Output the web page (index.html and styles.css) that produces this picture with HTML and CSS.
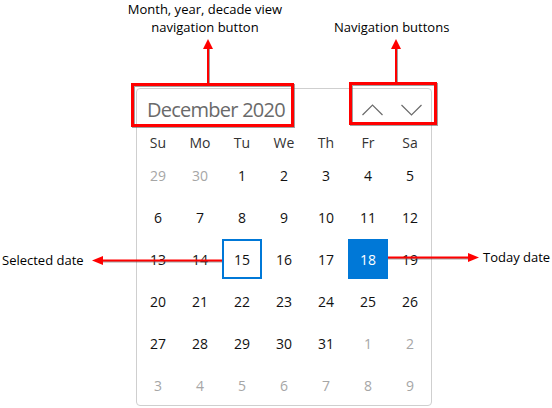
FILE: index.html
```html
<!DOCTYPE html>
<html>
<head>
<meta charset="utf-8">
<link rel="stylesheet" href="styles.css">
</head>
<body>
<div class="stage">
  <div class="calendar">
    <div class="cal-header">
      <button class="title-btn">December 2020</button>
      <div class="nav">
        <button class="nav-btn" aria-label="Previous"><svg width="21" height="12" viewBox="0 0 21 12"><polyline points="0.5,11 10.5,1 20.5,11" fill="none" stroke="#6b6b6b" stroke-width="1.2"/></svg></button>
        <button class="nav-btn" aria-label="Next"><svg width="21" height="12" viewBox="0 0 21 12"><polyline points="0.5,1 10.5,11 20.5,1" fill="none" stroke="#6b6b6b" stroke-width="1.2"/></svg></button>
      </div>
    </div>
    <div class="weekdays">
      <span>Su</span><span>Mo</span><span>Tu</span><span>We</span><span>Th</span><span>Fr</span><span>Sa</span>
    </div>
    <div class="days">
      <span class="other">29</span><span class="other">30</span><span>1</span><span>2</span><span>3</span><span>4</span><span>5</span>
      <span>6</span><span>7</span><span>8</span><span>9</span><span>10</span><span>11</span><span>12</span>
      <span>13</span><span>14</span><span class="selected">15</span><span>16</span><span>17</span><span class="today">18</span><span>19</span>
      <span>20</span><span>21</span><span>22</span><span>23</span><span>24</span><span>25</span><span>26</span>
      <span>27</span><span>28</span><span>29</span><span>30</span><span>31</span><span class="other">1</span><span class="other">2</span>
      <span class="other">3</span><span class="other">4</span><span class="other">5</span><span class="other">6</span><span class="other">7</span><span class="other">8</span><span class="other">9</span>
    </div>
  </div>

  <svg class="overlay" width="552" height="408" viewBox="0 0 552 408">
    <g stroke="#555" fill="none" opacity="0.55">
      <rect x="133.5" y="85.5" width="160" height="41" stroke-width="3"/>
      <rect x="351.5" y="84.5" width="85" height="40" stroke-width="3"/>
      <line x1="209" y1="83" x2="209" y2="48" stroke-width="2"/>
      <line x1="397" y1="83" x2="397" y2="48" stroke-width="2"/>
      <line x1="102" y1="261.5" x2="222" y2="261.5" stroke-width="2"/>
      <line x1="388" y1="258.5" x2="470" y2="258.5" stroke-width="2"/>
    </g>
    <g stroke="#ff0000" fill="none">
      <rect x="132.5" y="84.5" width="160" height="41" stroke-width="3"/>
      <rect x="350.5" y="83.5" width="85" height="40" stroke-width="3"/>
      <line x1="208" y1="83" x2="208" y2="48" stroke-width="2"/>
      <line x1="396" y1="82" x2="396" y2="48" stroke-width="2"/>
      <line x1="101" y1="260.5" x2="222" y2="260.5" stroke-width="2"/>
      <line x1="388" y1="257.5" x2="470" y2="257.5" stroke-width="2"/>
    </g>
    <g fill="#ff0000">
      <polygon points="203,49 208,39 213,49"/>
      <polygon points="391,49 396,39 401,49"/>
      <polygon points="103,256 92,260.5 103,265"/>
      <polygon points="468,253 479,257.5 468,262"/>
    </g>
  </svg>

  <div class="label label-month">Month, year, decade view<br>navigation button</div>
  <div class="label label-nav">Navigation buttons</div>
  <div class="label label-selected">Selected date</div>
  <div class="label label-today">Today date</div>
</div>
</body>
</html>
```

FILE: styles.css
```css
* { box-sizing: border-box; }

html, body {
  margin: 0;
  padding: 0;
  background: #ffffff;
}

.stage {
  position: relative;
  width: 552px;
  height: 408px;
  overflow: hidden;
  padding: 88px 0 0 136px;
  font-family: "Open Sans", "Noto Sans", sans-serif;
}

.calendar {
  width: 296px;
  border: 1px solid #cfcfcf;
  border-radius: 4px;
  background: #fff;
}

.cal-header {
  height: 41px;
  display: flex;
  align-items: center;
  justify-content: space-between;
  padding: 0 9px 0 10px;
}

.title-btn {
  border: none;
  background: none;
  padding: 0;
  margin: 0;
  font-family: inherit;
  font-size: 20px;
  color: #6a6a6a;
  line-height: 1;
  letter-spacing: -0.75px;
}

.nav {
  display: flex;
  gap: 18px;
  align-items: center;
}

.nav-btn {
  border: none;
  background: none;
  padding: 0;
  margin: 0;
  width: 21px;
  height: 12px;
  display: flex;
}

.weekdays,
.days {
  display: grid;
  grid-template-columns: repeat(7, 40px);
  column-gap: 2px;
  padding: 0 1px;
}

.weekdays {
  height: 25px;
  align-items: center;
}

.weekdays span {
  text-align: center;
  font-size: 14px;
  color: #333;
}

.days {
  grid-auto-rows: 40px;
  row-gap: 2px;
}

.days span {
  display: flex;
  align-items: center;
  justify-content: center;
  font-size: 14px;
  color: #111;
}

.days span.other {
  color: #a6a6a6;
}

.days span.selected {
  border: 2px solid #0078d7;
}

.days span.today {
  background: #0078d7;
  color: #fff;
}

.overlay {
  position: absolute;
  left: 0;
  top: 0;
  pointer-events: none;
}

.label {
  position: absolute;
  font-size: 13px;
  color: #000;
  line-height: 18px;
  white-space: nowrap;
}

.label-month {
  left: 120px;
  top: 0;
  width: 170px;
  text-align: center;
}

.label-nav {
  left: 334px;
  top: 18px;
}

.label-selected {
  left: 2px;
  top: 251px;
}

.label-today {
  left: 483px;
  top: 248px;
}
```
